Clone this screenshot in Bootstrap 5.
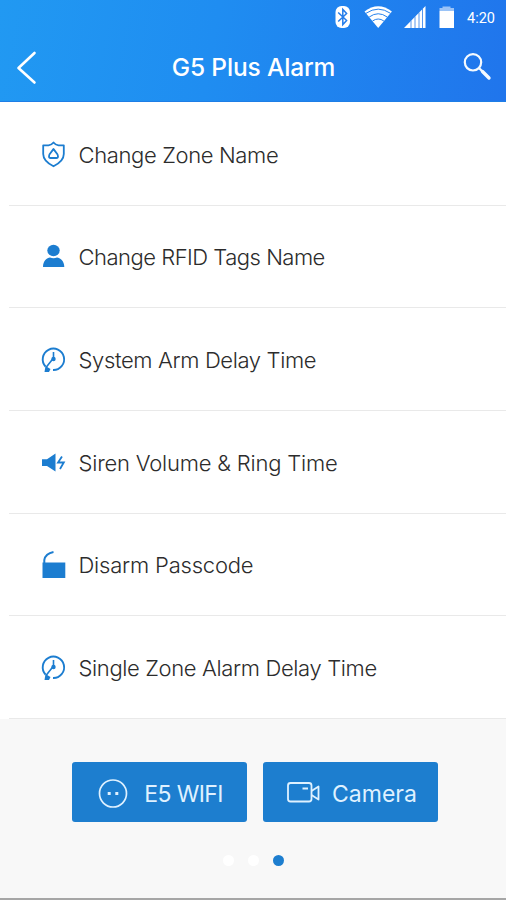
<!DOCTYPE html>
<html lang="en">
<head>
<meta charset="utf-8">
<meta name="viewport" content="width=device-width, initial-scale=1">
<title>G5 Plus Alarm</title>
<link href="https://cdn.jsdelivr.net/npm/bootstrap@5.3.0/dist/css/bootstrap.min.css" rel="stylesheet">
<style>
  body { font-family: Inter, "Liberation Sans", sans-serif; background: #f8f8f8; }
  .screen { height: 900px; border-bottom: 2px solid #a6a6a6; }
  .top-area { height: 102px; background: linear-gradient(100deg, #2199f2 0%, #1f8df1 42%, #2075ec 100%); border-bottom: 1px solid #1e7ee6; }
  .status { height: 33px; padding: 0 9px 0 0; }
  .clock { font: 400 14.5px/20px Roboto, sans-serif; width: 30px; margin-left: 13px; padding-top: 5px; }
  .title-bar { height: 67px; padding: 0 14px 0 16px; }
  .title { font-size: 24.5px; line-height: 30px; font-weight: 500; letter-spacing: -.15px; }
  .menu { height: 617px; padding: 1px 0 0 9px; background: #fff; }
  .menu-row { height: 102.67px; padding: 2px 0 0 31px; border-bottom: 1px solid #e9e9e9; color: #2c2c2c; background: #fff; }
  .menu-row svg { width: 28px; height: 30px; color: #1c7dd0; }
  .label { font-size: 22px; line-height: 28px; font-weight: 300; margin-left: 10.5px; white-space: nowrap; letter-spacing: -.36px; }
  .label-snug { letter-spacing: -.5px; }
  .label-loose { letter-spacing: -.2px; }
  .bottom { padding-top: 43px; }
  .devices { padding-left: 4px; }
  .device { width: 175px; height: 60px; background: #1d7ecf; border-radius: 3px; color: #dff1ff; font-size: 23px; padding: 4px 0 0 2px; }
  .device:hover { background: #1d7ecf; color: #dff1ff; }
  .device-tight { letter-spacing: -.6px; }
  .camera-icon { margin-right: 10px; }
  .pager { margin-top: 33px; gap: 14px; }
  .pager span { width: 11px; height: 11px; background: #fff; }
  .pager .current { background: #1d7ecf; }
</style>
</head>
<body>
<main class="screen d-flex flex-column overflow-hidden">
  <header class="top-area text-white flex-shrink-0">
    <div class="status d-flex justify-content-end align-items-center">
      <svg width="120" height="26" viewBox="334.500 3 120 26" fill="#fff">
        <rect x="336" y="5" width="14.5" height="22" rx="6"/>
        <path d="M338.700 11.500l8.400 8-3.800 4V8.500l3.800 4-8.400 8" fill="none" stroke="#247deb" stroke-width="1.500"/>
        <path d="M378.700 27L365 10.500Q378.700-.2 392.400 10.500Z"/>
        <path d="M366.500 12.300Q378.700 4 391 12.300M369.700 16Q378.700 9.500 387.700 16M373 20Q378.700 16 384.400 20" fill="none" stroke="#2682ed" stroke-width="1"/>
        <path d="M404.500 27L426 5V27Z"/>
        <path d="M411.500 19.500V27M415.500 15.500V27M419.500 11.500V27M423 8V27" stroke="#2b7ce9" stroke-width=".8"/>
        <path d="M440 10h14.500v17H440Z"/>
        <path d="M440 10V7h3V5.500h8V7h3.500v3Z" opacity=".55"/>
      </svg>
      <span class="clock">4:20</span>
    </div>
    <div class="title-bar d-flex align-items-center justify-content-between">
      <svg width="28" height="36" viewBox="16 49 28 36" fill="none" stroke="#fff" stroke-width="2.600" stroke-linecap="round" stroke-linejoin="round"><path d="M34.500 53L18.500 68L34.500 82.500"/></svg>
      <h1 class="title m-0">G5 Plus Alarm</h1>
      <svg width="29" height="30" viewBox="463 52 29 30" fill="none" stroke="#f4faff" stroke-linecap="round"><circle cx="473" cy="62.300" r="8.200" stroke-width="2.200"/><path d="M479.500 68.500L482 71" stroke-width="2.200"/><path d="M482.500 71.500L489 78" stroke-width="3.400"/></svg>
    </div>
  </header>

  <nav class="menu flex-shrink-0">
    <div class="menu-row d-flex align-items-center">
      <svg viewBox="0 0 28 30" fill="none" stroke="currentColor" stroke-width="1.800" stroke-linejoin="round"><path d="M13.500 2.500Q15.500 5 18.500 5.300H23.800V14C23.800 20 19 23.500 13.500 26.300C8 23.500 3.200 20 3.200 14V5.300H8.500Q11.500 5 13.500 2.500Z"/><path d="M13.500 9C14.500 11 18 13.500 18 16.200Q18 18 16.500 18H10.500Q9 18 9 16.200C9 13.500 12.500 11 13.500 9Z"/></svg>
      <span class="label">Change Zone Name</span>
    </div>
    <div class="menu-row d-flex align-items-center">
      <svg viewBox="0 0 28 30" fill="currentColor"><ellipse cx="13.500" cy="8.500" rx="6.200" ry="5.700"/><path d="M3 25C3 19 7 15.500 10 15.500Q13.500 17 17 15.500C20 15.500 24.300 19 24.300 25Z"/></svg>
      <span class="label label-snug">Change RFID Tags Name</span>
    </div>
    <div class="menu-row d-flex align-items-center">
      <svg viewBox="0 0 28 30" fill="none" stroke="currentColor" stroke-width="1.900"><path d="M5.500 21.500A10.700 10.700 0 1 1 13 25"/><path d="M13.500 7V13L6 22.500" stroke-width="1.600"/><circle cx="13.500" cy="14" r="2.200" fill="currentColor" stroke="none"/><path d="M5.500 21L10.500 24L9 27L4.500 27Z" fill="currentColor" stroke="none"/></svg>
      <span class="label">System Arm Delay Time</span>
    </div>
    <div class="menu-row d-flex align-items-center">
      <svg viewBox="0 0 28 30" fill="currentColor"><path d="M2 11.200H7L15.500 5.500V23.500L7 18H2Z"/><path d="M22 8.500L18 14.500H23.800L20 21" fill="none" stroke="currentColor" stroke-width="1.800"/></svg>
      <span class="label label-loose">Siren Volume &amp; Ring Time</span>
    </div>
    <div class="menu-row d-flex align-items-center">
      <svg viewBox="0 0 28 30" fill="currentColor"><path d="M2.500 12.500H25.300V28H2.500Z"/><path d="M4.300 13V10Q5.500 3.500 13.500 2" fill="none" stroke="currentColor" stroke-width="2"/></svg>
      <span class="label label-loose">Disarm Passcode</span>
    </div>
    <div class="menu-row d-flex align-items-center">
      <svg viewBox="0 0 28 30" fill="none" stroke="currentColor" stroke-width="1.900"><path d="M5.500 21.500A10.700 10.700 0 1 1 13 25"/><path d="M13.500 7V13L6 22.500" stroke-width="1.600"/><circle cx="13.500" cy="14" r="2.200" fill="currentColor" stroke="none"/><path d="M5.500 21L10.500 24L9 27L4.500 27Z" fill="currentColor" stroke="none"/></svg>
      <span class="label">Single Zone Alarm Delay Time</span>
    </div>
  </nav>

  <footer class="bottom">
    <div class="devices d-flex justify-content-center gap-3">
      <button class="device device-tight btn border-0 d-flex align-items-center justify-content-center">
        <svg class="me-3" width="30" height="30" viewBox="0 0 30 30" fill="none" stroke="currentColor" stroke-width="1.700"><circle cx="15" cy="14.500" r="13.500"/><path d="M9.700 14.500h3M17.300 14.500h3" stroke-width="3"/></svg>
        <span>E5 WIFI</span>
      </button>
      <button class="device btn border-0 d-flex align-items-center justify-content-center">
        <svg class="camera-icon" width="36" height="26" viewBox="0 0 36 26" fill="none" stroke="currentColor" stroke-width="1.800" stroke-linejoin="round"><rect x="2" y="2" width="23.500" height="18.500" rx="2.500"/><path d="M25.500 10L32.500 5.500V18.500L25.500 14M16.500 7.500H22"/></svg>
        <span>Camera</span>
      </button>
    </div>
    <div class="pager d-flex justify-content-center">
      <span class="rounded-circle"></span><span class="rounded-circle"></span><span class="rounded-circle current"></span>
    </div>
  </footer>
</main>
<script src="https://cdn.jsdelivr.net/npm/bootstrap@5.3.0/dist/js/bootstrap.bundle.min.js"></script>
</body>
</html>
